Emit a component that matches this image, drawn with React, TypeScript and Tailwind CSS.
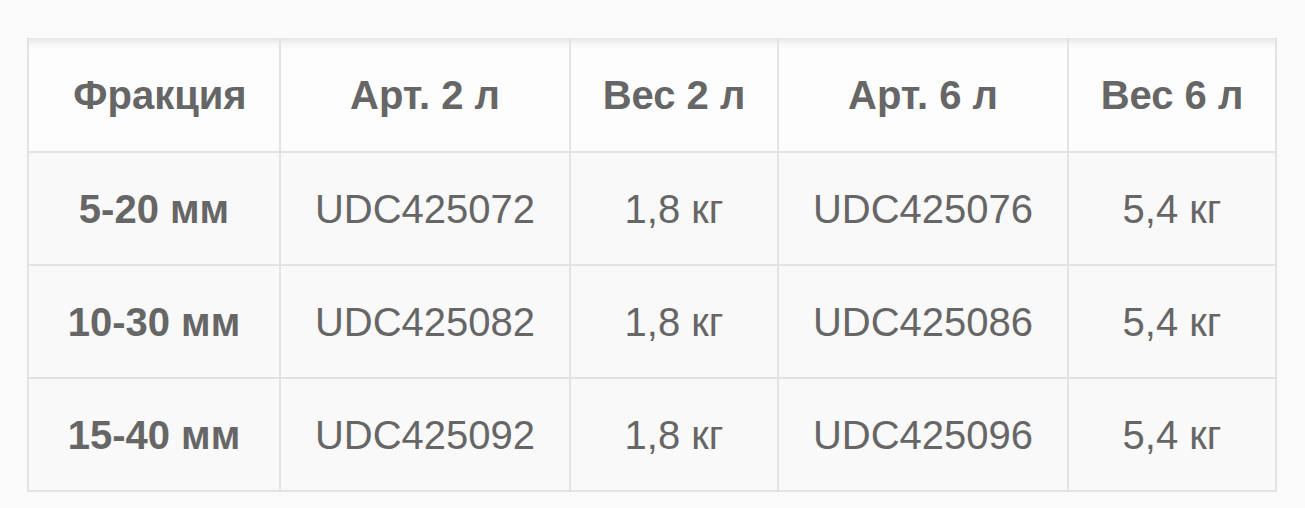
const headers = ['Фракция', 'Арт. 2 л', 'Вес 2 л', 'Арт. 6 л', 'Вес 6 л'];

const rows = [
  ['5-20 мм', 'UDC425072', '1,8 кг', 'UDC425076', '5,4 кг'],
  ['10-30 мм', 'UDC425082', '1,8 кг', 'UDC425086', '5,4 кг'],
  ['15-40 мм', 'UDC425092', '1,8 кг', 'UDC425096', '5,4 кг'],
];

const widths = ['w-[252px] pl-[12px]', 'w-[290px]', 'w-[208px]', 'w-[290px]', 'w-[208px]'];

export default function App() {
  return (
    <div className="min-h-[508px] bg-[#fafafa] pl-[27px] pt-[38px] font-['Liberation_Sans',Arial,sans-serif] text-[40px] text-[#666666]">
      <table className="table-fixed border-collapse">
        <thead>
          <tr className="h-[114px]">
            {headers.map((h, i) => (
              <th
                key={h}
                className={`${widths[i]} border-2 border-t-0 border-[#e3e3e3] bg-[linear-gradient(to_bottom,#e6e6e6_0px,#f6f6f6_6px,#fdfdfd_12px)] text-center align-middle font-bold leading-none`}
              >
                {h}
              </th>
            ))}
          </tr>
        </thead>
        <tbody>
          {rows.map((row) => (
            <tr key={row[0]} className="h-[113px] bg-[#f9f9f9]">
              {row.map((cell, i) => (
                <td
                  key={i}
                  className={`border-2 border-[#e3e3e3] text-center align-middle leading-none ${i === 0 ? 'font-bold' : ''}`}
                >
                  {cell}
                </td>
              ))}
            </tr>
          ))}
        </tbody>
      </table>
    </div>
  );
}
